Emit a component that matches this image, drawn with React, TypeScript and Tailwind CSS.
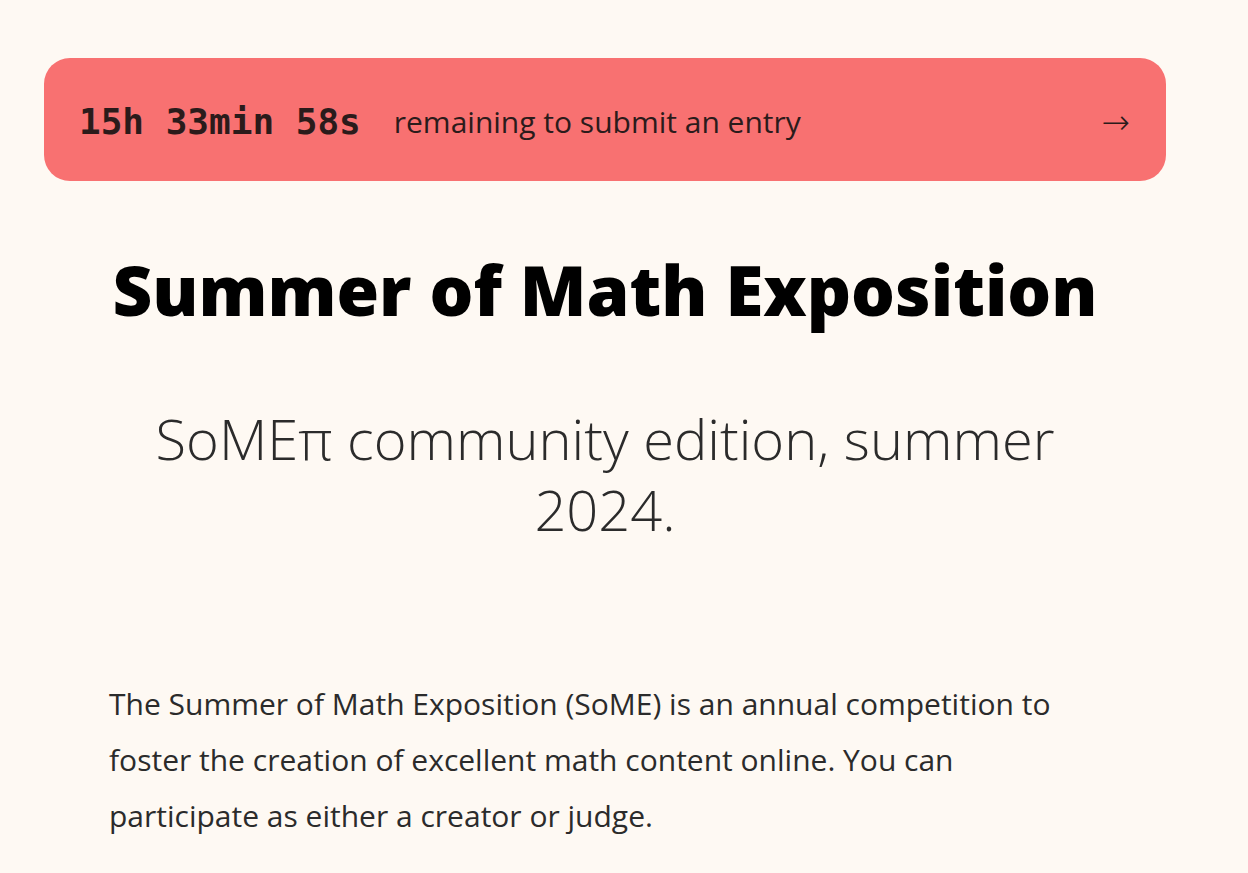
export default function App() {
  return (
    <div className="min-h-screen w-full bg-[#fef9f3] font-['Open_Sans',sans-serif]">
      <div className="ml-[44px] w-[1122px] pt-[58px]">
        {/* Countdown banner */}
        <a
          href="#"
          className="flex h-[123px] items-center rounded-[26px] bg-[#f87171] pl-[35px] pr-[36px] pt-[5px] text-[#2b1b1b]"
        >
          <span className="font-['DejaVu_Sans_Mono',monospace] text-[36px] font-bold leading-none">
            15h 33min 58s
          </span>
          <span className="ml-[33px] text-[30px] leading-none">remaining to submit an entry</span>
          <span className="ml-auto font-['DejaVu_Sans',sans-serif] text-[34px] font-extralight leading-none">→</span>
        </a>

        <div className="px-[65px]">
          <h1 className="mt-[67px] text-center text-[69px] font-extrabold leading-[1.2] text-black">
            Summer of Math Exposition
          </h1>
          <h2 className="mt-[72px] text-center text-[56px] font-light leading-[71px] text-[#2b2b2b]">
            SoMEπ community edition, summer 2024.
          </h2>
          <p className="mt-[131px] text-[30px] leading-[56px] text-[#2b2b2b]">
            The Summer of Math Exposition (SoME) is an annual competition to foster the creation of
            excellent math content online. You can participate as either a creator or judge.
          </p>
        </div>
      </div>
    </div>
  )
}
